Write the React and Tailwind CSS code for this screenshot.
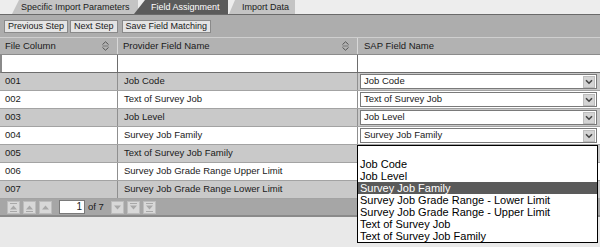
import React from 'react';

const font = { fontFamily: '"Liberation Sans", Arial, sans-serif' };

const SortIcon = () => (
  <svg width="7" height="10" viewBox="0 0 7 10" className="shrink-0">
    <path d="M0.5 3.5 L3.5 0.8 L6.5 3.5" fill="none" stroke="#555" strokeWidth="1" />
    <path d="M0.5 5 H6.5" stroke="#777" strokeWidth="1" />
    <path d="M0.5 6.5 L3.5 9.2 L6.5 6.5" fill="none" stroke="#555" strokeWidth="1" />
  </svg>
);

const Chevron = () => (
  <svg width="8" height="6" viewBox="0 0 8 6">
    <path d="M1 1.2 L4 4.2 L7 1.2" fill="none" stroke="#444" strokeWidth="1.6" />
  </svg>
);

const PageBtn = ({ kind }) => {
  const up = kind.startsWith('up');
  const tri = up ? 'M2 7.5 L5.5 3.5 L9 7.5 Z' : 'M2 3.5 L5.5 7.5 L9 3.5 Z';
  return (
    <div className="w-[13px] h-[13px] bg-[#d8d8d8] border border-[#bdbdbd] flex items-center justify-center">
      <svg width="11" height="11" viewBox="0 0 11 11">
        {(kind === 'up1' || kind === 'down1') && <path d={up ? 'M2 1.5 H9' : 'M2 9.5 H9'} stroke="#a8a8a8" strokeWidth="1" />}
        {(kind === 'up1' || kind === 'up2' || kind === 'down1' || kind === 'down2') && (
          <path d={up ? 'M2 9.5 H9' : 'M2 1.5 H9'} stroke="#a8a8a8" strokeWidth="1" />
        )}
        <path d={tri} fill="#a8a8a8" />
      </svg>
    </div>
  );
};

const rows = [
  { col: '001', name: 'Job Code', sap: 'Job Code' },
  { col: '002', name: 'Text of Survey Job', sap: 'Text of Survey Job' },
  { col: '003', name: 'Job Level', sap: 'Job Level' },
  { col: '004', name: 'Survey Job Family', sap: 'Survey Job Family' },
  { col: '005', name: 'Text of Survey Job Family' },
  { col: '006', name: 'Survey Job Grade Range Upper Limit' },
  { col: '007', name: 'Survey Job Grade Range Lower Limit' },
];

const options = [
  '',
  'Job Code',
  'Job Level',
  'Survey Job Family',
  'Survey Job Grade Range - Lower Limit',
  'Survey Job Grade Range - Upper Limit',
  'Text of Survey Job',
  'Text of Survey Job Family',
];

export default function App() {
  return (
    <div className="relative w-[600px] h-[247px] bg-[#e9e9e9] overflow-hidden text-[#1a1a1a]" style={font}>
      {/* Tabs */}
      <div className="flex h-[14px] bg-[#ededed] text-[9px] leading-[14px]">
        <div className="ml-[12px] w-[126px] bg-[#c4c4c4] pl-[9px] [clip-path:polygon(7px_0,100%_0,100%_100%,0_100%)]">
          Specific Import Parameters
        </div>
        <div className="-ml-[4px] w-[94px] bg-[#5b5b5b] text-white pl-[17px] [clip-path:polygon(11px_0,100%_0,100%_100%,0_100%)]">
          Field Assignment
        </div>
        <div className="ml-[1px] w-[66px] bg-[#c4c4c4] pl-[13px] [clip-path:polygon(6px_0,100%_0,100%_100%,0_100%)]">
          Import Data
        </div>
      </div>
      <div className="h-[1px] bg-[#6a6a6a]" />

      {/* Toolbar */}
      <div className="h-[22px] bg-[#adadad] flex items-center gap-[2px] pl-[4px] pt-[1px] text-[9px]">
        <button className="h-[13px] px-[3px] bg-[#e4e4e4] border border-[#8a8a8a] leading-[11px]">Previous Step</button>
        <button className="h-[13px] px-[3px] bg-[#e4e4e4] border border-[#8a8a8a] leading-[11px]">Next Step</button>
        <button className="h-[13px] px-[3px] ml-[2px] bg-[#e4e4e4] border border-[#8a8a8a] leading-[11px]">Save Field Matching</button>
      </div>

      {/* Table */}
      <div className="text-[9.5px]">
        <div className="grid grid-cols-[117px_240px_243px] h-[18px] bg-[#b2b2b2] border-t border-[#cfcfcf] border-b border-b-[#8c8c8c]">
          <div className="flex items-center justify-between pl-[5px] pr-[8px]">
            <span>File Column</span>
            <SortIcon />
          </div>
          <div className="flex items-center justify-between pl-[5px] pr-[8px] border-l border-[#d8d8d8]">
            <span>Provider Field Name</span>
            <SortIcon />
          </div>
          <div className="flex items-center pl-[6px] border-l border-[#d8d8d8]">SAP Field Name</div>
        </div>

        {/* filter row */}
        <div className="grid grid-cols-[117px_240px_243px] h-[18px] bg-[#a9a9a9]">
          <div className="bg-white border-l-2 border-b border-[#6d6d6d] border-l-[#8a8a8a]" />
          <div className="bg-white border-l border-b border-[#6d6d6d]" />
          <div className="bg-white border-l border-b border-[#6d6d6d]" />
        </div>

        {rows.map((r, i) => (
          <div
            key={r.col}
            className={`grid grid-cols-[117px_240px_243px] h-[18px] border-b border-[#a3a3a3] ${i % 2 === 0 ? 'bg-[#c9c9c9]' : 'bg-white'}`}
          >
            <div className="flex items-center pl-[5px]">{r.col}</div>
            <div className="flex items-center pl-[6px] border-l border-[#8f8f8f]">{r.name}</div>
            <div className="flex items-center pl-[2px] pr-[3px] border-l border-[#8f8f8f]">
              {r.sap && (
                <div className="flex items-center justify-between w-full h-[15px] bg-white border border-[#7a7a7a] pl-[3px] pr-[1px]">
                  <span>{r.sap}</span>
                  <div className="w-[12px] h-[12px] bg-[#d4d4d4] border border-[#bdbdbd] flex items-center justify-center">
                    <Chevron />
                  </div>
                </div>
              )}
            </div>
          </div>
        ))}

        {/* Pagination */}
        <div className="h-[18px] bg-[#a6a6a6] flex items-center pl-[7px] border-b-2 border-[#8a8a8a]">
          <div className="flex gap-[3px]">
            <PageBtn kind="up1" />
            <PageBtn kind="up2" />
            <PageBtn kind="up3" />
          </div>
          <div className="ml-[7px] w-[26px] h-[14px] bg-white border border-[#7a7a7a] text-right pr-[2px] leading-[12px] text-[10px]">1</div>
          <span className="ml-[3px] text-[9.5px]">of 7</span>
          <div className="flex gap-[3px] ml-[7px]">
            <PageBtn kind="down3" />
            <PageBtn kind="down2" />
            <PageBtn kind="down1" />
          </div>
        </div>
      </div>

      {/* Open dropdown list */}
      <div className="absolute left-[357px] top-[145px] w-[241px] bg-white border border-black text-[11px] leading-[12px]">
        {options.map((o, i) => (
          <div
            key={i}
            className={`h-[12px] pl-[2px] whitespace-nowrap ${o === 'Survey Job Family' ? 'bg-[#5a5a5a] text-white' : 'text-black'}`}
          >
            {o}
          </div>
        ))}
      </div>
    </div>
  );
}
